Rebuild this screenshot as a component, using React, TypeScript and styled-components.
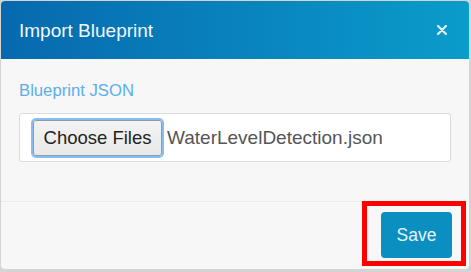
import React from "react";
import styled, { createGlobalStyle } from "styled-components";

const Global = createGlobalStyle`
  html, body { margin: 0; padding: 0; }
  body {
    background: #d4d4d4;
    font-family: "Liberation Sans", Arial, sans-serif;
    width: 471px;
    height: 272px;
    overflow: hidden;
  }
`;

const Page = styled.div`
  padding: 1px 2px 3px 1px;
`;

const Modal = styled.div`
  width: 468px;
  height: 268px;
  display: flex;
  flex-direction: column;
  background: #f7f7f7;
  border-radius: 4px;
  overflow: visible;
`;

const Header = styled.div`
  height: 58px;
  flex: none;
  display: flex;
  align-items: center;
  justify-content: space-between;
  padding: 0 22px 0 18px;
  background: linear-gradient(to right, #0769ae, #0a9ccb);
  border-radius: 4px 4px 0 0;
  box-sizing: border-box;
`;

const Title = styled.h4`
  margin: 0;
  font-size: 19px;
  font-weight: 400;
  color: #f2f8fc;
  line-height: 24px;
  padding-top: 2px;
`;

const Close = styled.button`
  border: 0;
  background: none;
  padding: 0;
  width: 10px;
  height: 10px;
  display: flex;
  cursor: pointer;
`;

const Body = styled.div`
  height: 142px;
  flex: none;
  padding: 22px 18px 0 18px;
  box-sizing: border-box;
  display: flex;
  flex-direction: column;
`;

const Label = styled.label`
  font-size: 16.7px;
  color: #5caeea;
  line-height: 20px;
  margin-bottom: 12px;
`;

const FileBox = styled.div`
  height: 49px;
  box-sizing: border-box;
  background: #fff;
  border: 1px solid #dcdcdc;
  border-radius: 3px;
  display: flex;
  align-items: center;
  padding-left: 13px;
`;

const ChooseButton = styled.span`
  height: 36px;
  width: 129px;
  box-sizing: border-box;
  display: flex;
  align-items: center;
  justify-content: center;
  background: linear-gradient(#f3f3f3, #e9e9e9);
  border: 1px solid #8e9aa6;
  border-radius: 3px;
  box-shadow: 0 0 0 2px #88bdf3;
  font-size: 18.5px;
  color: #222;
`;

const FileName = styled.span`
  margin-left: 5px;
  font-size: 19px;
  color: #555;
`;

const Footer = styled.div`
  flex: 1;
  border-top: 1px solid #ececec;
  display: flex;
  justify-content: flex-end;
  align-items: flex-start;
  padding: 10px 17px 0 0;
  border-radius: 0 0 4px 4px;
`;

const Highlight = styled.div`
  position: relative;
`;

const RedBox = styled.div`
  position: absolute;
  top: -11px;
  left: -19px;
  right: -14px;
  bottom: -8px;
  border: 5px solid #ff0000;
  pointer-events: none;
`;

const SaveButton = styled.button`
  width: 71px;
  height: 46px;
  border: 0;
  border-radius: 4px;
  background: #0b8ec0;
  color: #e6f3f9;
  font-family: "Liberation Sans", Arial, sans-serif;
  font-size: 17.5px;
  padding: 0;
  cursor: pointer;
`;

export default function App() {
  return (
    <>
      <Global />
      <Page>
        <Modal>
          <Header>
            <Title>Import Blueprint</Title>
            <Close aria-label="Close">
              <svg width="10" height="10" viewBox="0 0 10 10">
                <path d="M1 1L9 9M9 1L1 9" stroke="#e4f1f8" strokeWidth="2.2" strokeLinecap="round" />
              </svg>
            </Close>
          </Header>
          <Body>
            <Label>Blueprint JSON</Label>
            <FileBox>
              <ChooseButton>Choose Files</ChooseButton>
              <FileName>WaterLevelDetection.json</FileName>
            </FileBox>
          </Body>
          <Footer>
            <Highlight>
              <SaveButton>Save</SaveButton>
              <RedBox />
            </Highlight>
          </Footer>
        </Modal>
      </Page>
    </>
  );
}
